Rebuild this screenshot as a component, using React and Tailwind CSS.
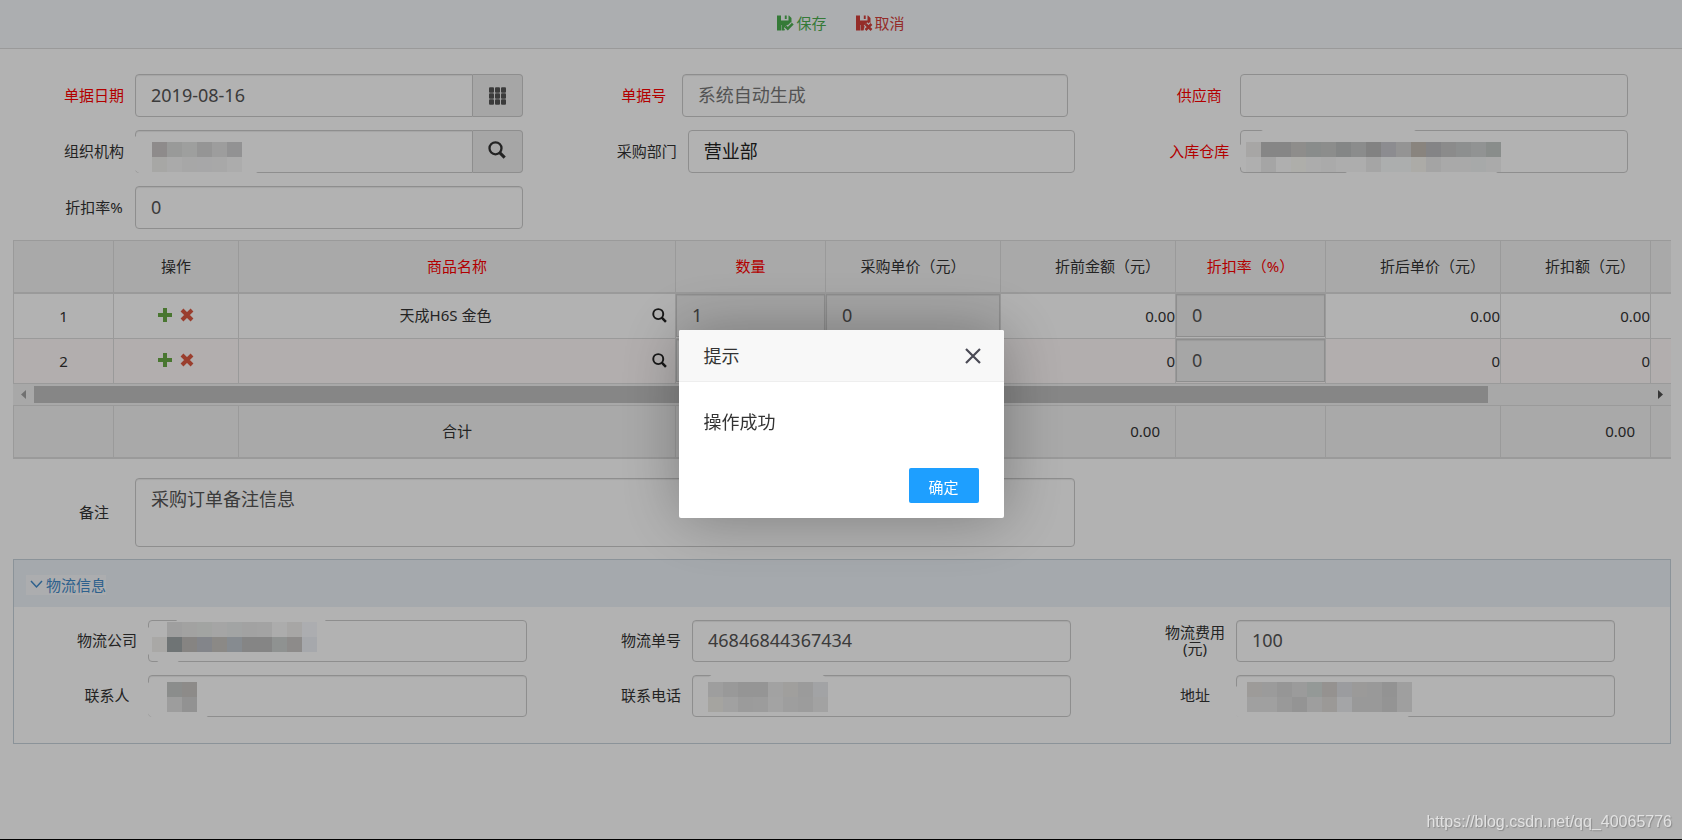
import { useState } from 'react';

const columnas = [
    { key: 'index', width: 'w-[100px]', title: '' },
    { key: 'actions', width: 'w-[125px]', title: '操作' },
    { key: 'name', width: 'w-[437px]', title: '商品名称', required: true },
    { key: 'qty', width: 'w-[150px]', title: '数量', required: true },
    { key: 'price', width: 'w-[175px]', title: '采购单价（元）' },
    { key: 'amount', width: 'w-[175px]', title: '折前金额（元）', right: true },
    { key: 'rate', width: 'w-[150px]', title: '折扣率（%）', required: true },
    { key: 'netPrice', width: 'w-[175px]', title: '折后单价（元）', right: true },
    { key: 'discount', width: 'w-[150px]', title: '折扣额（元）', right: true },
    { key: 'netAmount', width: 'w-[175px]', title: '' },
];

const initialRows = [
    { id: 1, name: '天成H6S 金色', qty: '1', price: '0', rate: '0', amount: '0.00', netPrice: '0.00', discount: '0.00' },
    { id: 2, name: '', qty: '', price: '', rate: '0', amount: '0', netPrice: '0', discount: '0' },
];

// masked values: blobs cover the border, cells are 15px squares
const masks = {
    org: {
        blobs: [[-3, 3, 131, 41]],
        x: 17,
        y: 12,
        rows: [
            ['#ccc8c8', '#dbdddc', '#e3e4e3', '#d6d6d6', '#e1e1e1', '#d1d2d3'],
            ['#efefed', '#f4f4f4', '#f0f0f0', '#f0f0f1', '#f1f1f1', '#f7f7f7'],
        ],
    },
    warehouse: {
        blobs: [[-2, 10, 200, 32], [16, -1, 165, 20], [100, 6, 163, 38]],
        x: 6,
        y: 12,
        rows: [
            ['#f0eeec', '#c1c1c1', '#c1c1c1', '#cccac8', '#c5c9c7', '#c9cac9', '#bec1c0', '#c8c9c9', '#bababa', '#c9c9ce', '#d5d5d5', '#c4bdb5', '#bebec0', '#c7c8c8', '#cbcdcd', '#d0d3d3', '#c4cac8'],
            ['#fbfbfb', '#ececec', '#fbfbfb', '#faf9f4', '#f6f7f7', '#f4f4f4', '#f8f8f8', '#f8f8f8', '#ededed', '#f6fafa', '#f6fafa', '#f7f5f0', '#ebebeb', '#f3f3f3', '#f3f3f3', '#f0f3f2', '#f4f4f4'],
        ],
    },
    company: {
        blobs: [[-3, 4, 70, 34], [26, -4, 154, 42], [5, 20, 30, 24]],
        x: 4,
        y: 2,
        rows: [
            [null, '#e4e4e4', '#e9e9e7', '#e8ebe9', '#ececec', '#e9ebeb', '#e8e9e9', '#eaeaea', '#f7f7f7', '#f0eeec', '#f7f8fc'],
            ['#f3f1ee', '#a0a6a8', '#c1bebb', '#bcbfc6', '#c8c4c1', '#c0c7ce', '#bfbfbf', '#bfbfbf', '#cdd1d0', '#cbc8c6', '#eef1f7'],
        ],
    },
    contact: {
        blobs: [[-2, 3, 66, 41]],
        x: 19,
        y: 7,
        rows: [
            ['#c8cac9', '#cbc8c4'],
            ['#e1e1e1', '#d1d1d1'],
        ],
    },
    phone: {
        blobs: [[3, 3, 40, 34], [14, -2, 122, 40]],
        x: 16,
        y: 7,
        rows: [
            ['#e2e2e2', '#dcdcdc', '#d6d6d6', '#d6d6d6', '#e9e9e9', '#e5e4e1', '#dedede', '#e9eaed'],
            ['#ecebe6', '#e7e7e7', '#dedede', '#e0e0e0', '#eaeaea', '#e2e2e2', '#e0e0e0', '#e9e9e9'],
        ],
    },
    address: {
        blobs: [[-3, 8, 180, 36]],
        x: 11,
        y: 7,
        rows: [
            ['#e1dfdc', '#dfdfdf', '#d7d7d7', '#dedede', '#d5dbd8', '#d6d2ce', '#dfe0e4', '#dedddb', '#dcdcdc', '#d3d3d3', '#e4e4e4'],
            ['#e5e5e5', '#e5e5e5', '#dbdbdb', '#d5d5d5', '#e2e2e2', '#dedcd8', '#ebecef', '#dcdcdc', '#dbdbdb', '#d5d5d5', '#e4e4e4'],
        ],
    },
};

const controlBase = 'w-full rounded border border-[#ccc] bg-white px-[15px] pb-0.5 text-lg leading-6 outline-none';

function Mask({ mask }) {
    return (
        <svg className="pointer-events-none absolute inset-0 h-full w-full overflow-visible" aria-hidden="true">
            {mask.blobs.map(([x, y, w, h]) => (
                <rect key={`${x}-${y}`} x={x} y={y} width={w} height={h} rx="12" fill="#fff" />
            ))}
            {mask.rows.map((row, r) =>
                row.map((fill, c) => fill && (
                    <rect key={`${r}-${c}`} x={mask.x + c * 15} y={mask.y + r * 15} width="15" height="15" fill={fill} shapeRendering="crispEdges" />
                ))
            )}
        </svg>
    );
}

// mark: path of the small sign cut into the lower right corner
function FloppyIcon({ mark }) {
    return (
        <svg viewBox="0 0 17 16" className="h-4 w-[17px]" fill="none" aria-hidden="true">
            <path fill="currentColor" d="M0 .5h4v5h7.500v-5h.5l2.500 2.500v6l-3 2.500-3 1-1 3H4.500V10H4v5.500H0z" />
            <path fill="currentColor" d="M7.800.5h1.900v3.500H7.800z" />
            <path d={mark} stroke="#f7f9fc" strokeWidth="5" />
            <path d={mark} stroke="currentColor" strokeWidth="2.500" />
        </svg>
    );
}

function SearchIcon({ className }) {
    return (
        <svg viewBox="0 0 18 18" className={className} fill="none" stroke="currentColor" aria-hidden="true">
            <circle cx="7.500" cy="7.300" r="6" strokeWidth="2.300" />
            <path d="M11.700 11.600l5 5" strokeWidth="3" />
        </svg>
    );
}

function GridIcon() {
    return (
        <svg viewBox="0 0 17 18" className="h-[18px] w-[17px]" fill="currentColor" aria-hidden="true">
            {[0, 6, 12].map((x) => [0, 6, 12].map((y) => (
                <rect key={`${x}-${y}`} x={x} y={y + 0.25} width="5" height="5.500" rx="1" />
            )))}
        </svg>
    );
}

function PlusIcon() {
    return (
        <svg viewBox="0 0 14 14" className="h-3.5 w-3.5" fill="currentColor" aria-hidden="true">
            <path d="M5 0h4v5h5v4H9v5H5V9H0V5h5z" />
        </svg>
    );
}

function CrossIcon() {
    return (
        <svg viewBox="0 0 14 14" className="h-3.5 w-3.5" fill="none" stroke="currentColor" strokeWidth="4" aria-hidden="true">
            <path d="M2 2l10 10M12 2L2 12" />
        </svg>
    );
}

function Field({ id, label, required, narrow, mask, children }) {
    return (
        <div className={`flex items-center pl-10 ${narrow ? 'pr-[50px]' : 'pr-[43px]'}`}>
            <label
                htmlFor={id}
                className={`shrink-0 pb-0.5 text-center leading-4 ${narrow ? 'w-[76px]' : 'w-[82px]'} ${required ? 'text-[#f00]' : ''}`}
            >
                {label}
            </label>
            <div className="relative flex min-w-0 flex-1">
                {children}
                {mask && <Mask mask={mask} />}
            </div>
        </div>
    );
}

function TextInput({ id, className = 'h-[43px]', ...props }) {
    return (
        <input
            id={id}
            type="text"
            className={`${controlBase} min-w-0 flex-1 text-[#555] shadow-[inset_0_1px_1px_rgba(0,0,0,0.075)] placeholder:text-[#777] ${className}`}
            {...props}
        />
    );
}

function SelectInput({ id, options = [''], className = 'h-[43px]' }) {
    return (
        <select id={id} className={`${controlBase} appearance-none text-[#222] ${className}`}>
            {options.map((o) => <option key={o}>{o}</option>)}
        </select>
    );
}

function Columns() {
    return (
        <colgroup>
            {columnas.map((c) => <col key={c.key} className={c.width} />)}
        </colgroup>
    );
}

const tableClass = 'w-[1812px] table-fixed border-separate border-spacing-0';
const cell = 'border-r border-b border-[#ddd] p-0';
const headCell = 'h-[53px] border-r border-b-2 border-[#ddd] bg-[#f2f2f2] px-[15px] pt-0 pb-0.5 font-normal';

function CellInput({ label, value }) {
    return (
        <input
            type="text"
            aria-label={label}
            defaultValue={value}
            className="mb-px block h-[43px] w-full border border-[#ccc] bg-[#eee] px-[15px] pb-0.5 text-lg leading-6 text-[#555] shadow-[inset_0_1px_1px_rgba(0,0,0,0.075)] outline-none"
        />
    );
}

function ItemsTable() {
    const [rows, setRows] = useState(initialRows);

    const addRow = () => {
        setRows([...rows, { ...initialRows[1], id: Date.now() }]);
    };

    const removeRow = (id) => {
        setRows(rows.filter((row) => row.id !== id));
    };

    return (
        <div className="mt-[11px] overflow-hidden">
            <div className="overflow-hidden border-t border-l border-[#ddd]">
                <table className={tableClass}>
                    <Columns />
                    <thead>
                        <tr>
                            {columnas.map((c) => (
                                <th
                                    key={c.key}
                                    className={`${headCell} ${c.right ? 'text-right' : 'text-center'} ${c.required ? 'text-[#f00]' : ''}`}
                                >
                                    {c.title}
                                </th>
                            ))}
                        </tr>
                    </thead>
                    <tbody>
                        {rows.map((row, i) => (
                            <tr key={row.id} className="h-[45px] even:bg-[#fffafa]">
                                <td className={`${cell} text-center`}>{i + 1}</td>
                                <td className={cell}>
                                    <div className="flex items-center justify-center gap-2 pb-0.5">
                                        <button type="button" aria-label="新增" onClick={addRow} className="text-[#69aa46]"><PlusIcon /></button>
                                        <button type="button" aria-label="删除" onClick={() => removeRow(row.id)} className="text-[#dd5a43]"><CrossIcon /></button>
                                    </div>
                                </td>
                                <td className={cell}>
                                    <div className="flex items-center pr-2 pb-0.5">
                                        <span className="flex-1 text-center">{row.name}</span>
                                        <button type="button" aria-label="选择商品" className="text-[#222]"><SearchIcon className="h-[15px] w-[15px]" /></button>
                                    </div>
                                </td>
                                <td className={cell}><CellInput label="数量" value={row.qty} /></td>
                                <td className={cell}><CellInput label="采购单价" value={row.price} /></td>
                                <td className={`${cell} text-right`}>{row.amount}</td>
                                <td className={cell}><CellInput label="折扣率" value={row.rate} /></td>
                                <td className={`${cell} text-right`}>{row.netPrice}</td>
                                <td className={`${cell} text-right`}>{row.discount}</td>
                                <td className={cell}></td>
                            </tr>
                        ))}
                    </tbody>
                </table>
            </div>

            {/* horizontal scrollbar */}
            <div className="flex h-[21px] items-center bg-[#f1f1f1]">
                <svg viewBox="0 0 21 17" className="h-[17px] w-[21px] shrink-0" fill="#a3a3a3" aria-hidden="true"><path d="M13 4v9L8 8.500z" /></svg>
                <div className="flex-1">
                    <div className="h-[17px] w-9/10 bg-[#c1c1c1]"></div>
                </div>
                <svg viewBox="0 0 21 17" className="h-[17px] w-[21px] shrink-0" fill="#505050" aria-hidden="true"><path d="M8 4v9l5-4.500z" /></svg>
            </div>

            <div className="overflow-hidden border-t border-l border-[#ddd]">
                <table className={tableClass}>
                    <Columns />
                    <tbody>
                        <tr>
                            {columnas.map((c) => (
                                <td key={c.key} className={`${headCell} ${c.right ? 'text-right' : 'text-center'}`}>
                                    {c.key === 'name' && '合计'}
                                    {(c.key === 'amount' || c.key === 'discount') && '0.00'}
                                </td>
                            ))}
                        </tr>
                    </tbody>
                </table>
            </div>
        </div>
    );
}

function MessageDialog({ onClose }) {
    return (
        <div className="fixed inset-0 flex items-center justify-center border-b border-black bg-black/30 pt-2">
            <div
                role="dialog"
                aria-modal="true"
                aria-labelledby="dialog-title"
                className="w-[325px] overflow-hidden rounded-xs bg-white text-[#333] shadow-[1px_1px_62px_rgba(0,0,0,0.3)]"
            >
                <div className="flex h-[52px] items-center justify-between border-b border-[#eee] bg-[#f8f8f8] pt-0.5 pr-[23px] pl-[25px]">
                    <h2 id="dialog-title" className="text-lg leading-6">提示</h2>
                    <button type="button" aria-label="关闭" onClick={onClose} className="text-[#4a4a55]">
                        <svg viewBox="0 0 16 16" className="h-4 w-4" fill="none" stroke="currentColor" strokeWidth="2.200" aria-hidden="true">
                            <path d="M1 1l14 14M15 1L1 15" />
                        </svg>
                    </button>
                </div>
                <p className="px-[25px] pt-7 pb-[34px] text-lg leading-6">操作成功</p>
                <div className="flex justify-end pr-[25px] pb-[15px]">
                    <button type="button" onClick={onClose} className="h-[35px] w-[70px] rounded-xs bg-[#1e9fff] pt-1 text-white">确定</button>
                </div>
            </div>
        </div>
    );
}

export default function App() {
    const [dialogOpen, setDialogOpen] = useState(true);

    return (
        <div className="min-h-screen bg-white font-['Noto_Sans','Noto_Sans_CJK_SC',sans-serif] text-[15px] leading-5 text-[#333]">
            <header className="flex h-[49px] items-center justify-center gap-[29px] border-b border-[#ddd] bg-[#f7f9fc] pb-0.5">
                <button type="button" className="flex items-center gap-0.5 text-[#4caf50]">
                    <FloppyIcon mark="M8.500 11.500l2.300 2.200 5-5" />保存
                </button>
                <button type="button" className="flex items-center gap-0.5 text-[#d43f3a]">
                    <FloppyIcon mark="M9.500 9l6 6m0-6l-6 6" />取消
                </button>
            </header>

            <main className="pt-[25px] pr-[11px] pl-[13px]">
                <form className="grid grid-cols-3 gap-y-[13px]">
                    <Field id="date" label="单据日期" required>
                        <TextInput id="date" defaultValue="2019-08-16" className="h-[43px] rounded-r-none" />
                        <button type="button" aria-label="选择日期" className="flex w-[50px] items-center justify-center rounded-r border border-l-0 border-[#ccc] bg-[#eee] text-[#555]">
                            <GridIcon />
                        </button>
                    </Field>
                    <Field id="number" label="单据号" required narrow>
                        <TextInput id="number" placeholder="系统自动生成" />
                    </Field>
                    <Field id="supplier" label="供应商" required>
                        <SelectInput id="supplier" />
                    </Field>
                    <Field id="org" label="组织机构" mask={masks.org}>
                        <TextInput id="org" className="h-[43px] rounded-r-none" />
                        <button type="button" aria-label="选择机构" className="flex w-[50px] items-center justify-center rounded-r border border-l-0 border-[#ccc] bg-[#eee] pb-1">
                            <SearchIcon className="h-[18px] w-[18px]" />
                        </button>
                    </Field>
                    <Field id="dept" label="采购部门">
                        <SelectInput id="dept" options={['营业部']} />
                    </Field>
                    <Field id="warehouse" label="入库仓库" required mask={masks.warehouse}>
                        <SelectInput id="warehouse" />
                    </Field>
                    <Field id="rate" label="折扣率%">
                        <TextInput id="rate" defaultValue="0" />
                    </Field>
                </form>

                <ItemsTable />

                <div className="mt-[19px] grid grid-cols-3">
                    <div className="col-span-2">
                        <Field id="remark" label="备注">
                            <textarea
                                id="remark"
                                defaultValue="采购订单备注信息"
                                className={`${controlBase} h-[69px] resize-none pt-2 text-[#555] shadow-[inset_0_1px_1px_rgba(0,0,0,0.075)]`}
                            />
                        </Field>
                    </div>
                </div>

                <section className="mt-3 border border-[#c8d3db]">
                    <div className="flex h-[47px] items-center bg-[#edf2f8] px-3 pt-0.5">
                        <a href="#logistics" className="flex h-5 items-center bg-[#f6f8fb] text-[#428bca]">
                            <svg viewBox="0 0 20 20" className="h-5 w-5" fill="none" stroke="currentColor" strokeWidth="1.500" aria-hidden="true">
                                <path d="M5 6l5.500 6L16 6" />
                            </svg>
                            物流信息
                        </a>
                    </div>
                    <div id="logistics" className="grid grid-cols-3 gap-y-[13px] px-3 pt-[13px] pb-[26px]">
                        <Field id="company" label="物流公司" mask={masks.company}>
                            <SelectInput id="company" className="h-[42px]" />
                        </Field>
                        <Field id="tracking" label="物流单号">
                            <TextInput id="tracking" defaultValue="46846844367434" className="h-[42px]" />
                        </Field>
                        <Field id="fee" label={<>物流费用<br />(元)</>}>
                            <TextInput id="fee" defaultValue="100" className="h-[42px]" />
                        </Field>
                        <Field id="contact" label="联系人" mask={masks.contact}>
                            <TextInput id="contact" className="h-[42px]" />
                        </Field>
                        <Field id="phone" label="联系电话" mask={masks.phone}>
                            <TextInput id="phone" className="h-[42px]" />
                        </Field>
                        <Field id="address" label="地址" mask={masks.address}>
                            <TextInput id="address" className="h-[42px]" />
                        </Field>
                    </div>
                </section>
            </main>

            {dialogOpen && <MessageDialog onClose={() => setDialogOpen(false)} />}

            <p className="fixed right-2.5 bottom-1.5 font-['Liberation_Sans',sans-serif] text-base leading-6 text-[#e2e2e2] [text-shadow:1px_1px_1px_#8a8a8a]">
                https://blog.csdn.net/qq_40065776
            </p>
        </div>
    );
}
